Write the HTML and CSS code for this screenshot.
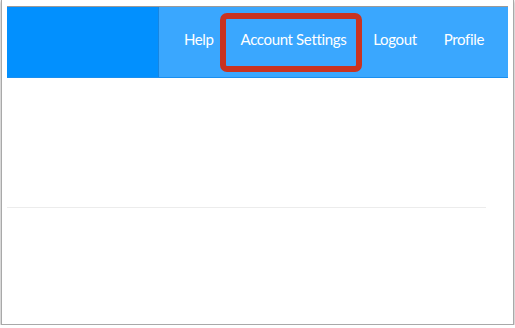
FILE: index.html
```html
<!DOCTYPE html>
<html>
<head>
  <title>Account Settings</title>
  <meta charset="utf-8">
  <link rel="stylesheet" href="styles.css">
</head>
<body>
  <div class="window">
    <div class="header">
      <div class="brand"></div>
      <ul class="nav">
        <li><a href="#">Help</a></li>
        <li class="marked"><a href="#">Account Settings</a></li>
        <li><a href="#">Logout</a></li>
        <li><a href="#">Profile</a></li>
      </ul>
    </div>
    <div class="main">
      <hr class="divider">
    </div>
  </div>
</body>
</html>
```

FILE: styles.css
```css
body {
  margin: 0;
  background: #fff;
  font-family: Lato, "Open Sans", sans-serif;
}
ul,li {
  padding: 0;
  margin: 0;
}
li {
  list-style-type: none;
}
.window {
  margin: 0 1px;
  height: 325px;
  box-sizing: border-box;
  padding: 6px 5px 0 5px;
  border: 1px solid #a9a9a9;
  border-top: none;
  box-shadow: 0 1px 3px rgba(0,0,0,0.4);
}
.header {
  display: flex;
  height: 70px;
  border-top: 1px solid #9a9a9a;
  border-bottom: 1px solid #1a8ff0;
  background: #3aa7fe;
}
.brand {
  width: 151px;
  background: #0290fe;
  border-right: 1px solid #1785e0;
}
.nav {
  flex: 1;
  display: flex;
  justify-content: flex-end;
  align-items: flex-start;
  gap: 27px;
  padding-top: 22px;
  padding-right: 24px;
}
.nav li {
  position: relative;
}
.nav a {
  display: block;
  color: #fff;
  text-decoration: none;
  font-size: 15px;
  line-height: 20px;
  letter-spacing: -0.35px;
}
.marked::after {
  content: "";
  position: absolute;
  left: -21px;
  right: -16px;
  top: -16px;
  bottom: -23px;
  border: 6px solid #c93320;
  border-radius: 7px;
}
.main {
  padding-top: 129px;
  padding-right: 22px;
}
.divider {
  margin: 0;
  border: none;
  border-top: 1px solid #ececec;
}
```
